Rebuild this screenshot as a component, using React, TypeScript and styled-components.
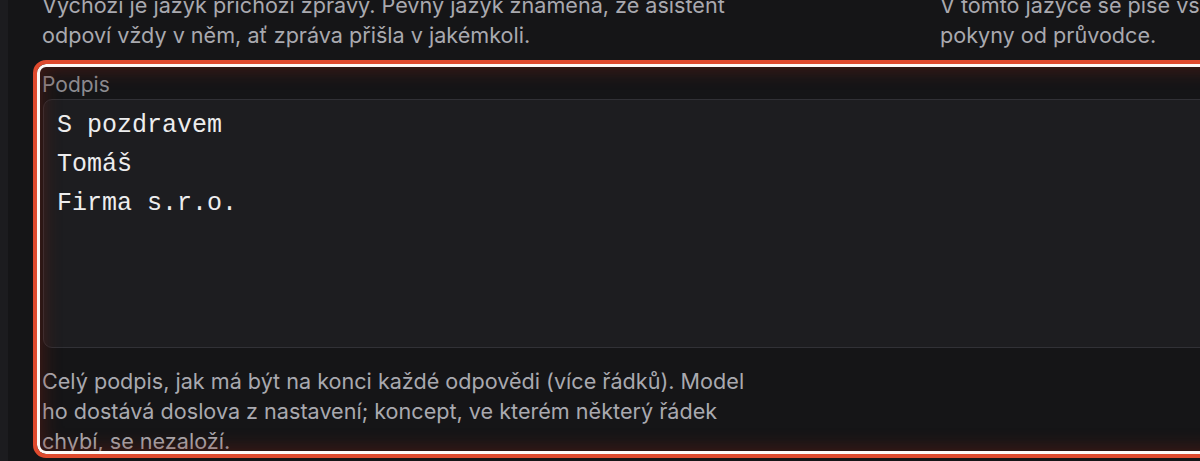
import React from "react";
import styled, { createGlobalStyle } from "styled-components";

const Global = createGlobalStyle`
  html, body { margin: 0; padding: 0; background: #151517; overflow: hidden; }
  body { font-family: Inter, "Noto Sans", sans-serif; }
`;

const Shell = styled.div`
  display: flex;
  width: 1900px;
  height: 461px;
  background: #151517;
`;

const Rail = styled.div`
  width: 8px;
  flex: none;
  background: #1c1c1f;
`;

const Main = styled.div`
  flex: 1;
  padding: 0 0 0 34px;
  display: flex;
  flex-direction: column;
`;

const Columns = styled.div`
  display: grid;
  grid-template-columns: 870px 870px;
  column-gap: 28px;
  margin-top: -10px;
`;

const Hint = styled.p`
  margin: 0;
  font-size: 21.6px;
  line-height: 30px;
  color: #a9a9af;
  white-space: nowrap;
`;

const Field = styled.section`
  position: relative;
  margin-top: 23px;
  width: 1768px;
  display: flex;
  flex-direction: column;
`;

const Label = styled.label`
  font-size: 21px;
  line-height: 24px;
  color: #8c8c91;
`;

const TextArea = styled.textarea`
  margin: 2px 0 0 1px;
  box-sizing: border-box;
  height: 249px;
  padding: 6px 13px;
  background: #1d1d20;
  border: 1px solid #313136;
  border-radius: 9px;
  color: #ededee;
  font-family: "Liberation Mono", "DejaVu Sans Mono", monospace;
  font-size: 25px;
  line-height: 39px;
  resize: none;
  outline: none;
`;

const Help = styled(Hint)`
  margin-top: 18px;
`;

const Spotlight = styled.div`
  position: absolute;
  left: -9px;
  top: -13px;
  right: -9px;
  bottom: -2px;
  border: 4px solid #df4a2e;
  border-radius: 13px;
  box-shadow: inset 0 0 0 3px #fdf8f6, inset 0 0 18px 6px rgba(130, 32, 18, 0.4);
  pointer-events: none;
`;

export default function App() {
  return (
    <>
      <Global />
      <Shell>
        <Rail />
        <Main>
          <Columns>
            <Hint>
              Výchozí je jazyk příchozí zprávy. Pevný jazyk znamená, že asistent
              <br />
              odpoví vždy v něm, ať zpráva přišla v jakémkoli.
            </Hint>
            <Hint>
              V tomto jazyce se píše vše, co asistent připraví, včetně odpovědí na
              <br />
              pokyny od průvodce.
            </Hint>
          </Columns>
          <Field>
            <Label htmlFor="podpis">Podpis</Label>
            <TextArea
              id="podpis"
              readOnly
              defaultValue={"S pozdravem\nTomáš\nFirma s.r.o."}
            />
            <Help>
              Celý podpis, jak má být na konci každé odpovědi (více řádků). Model
              <br />
              ho dostává doslova z nastavení; koncept, ve kterém některý řádek
              <br />
              chybí, se nezaloží.
            </Help>
            <Spotlight />
          </Field>
        </Main>
      </Shell>
    </>
  );
}
